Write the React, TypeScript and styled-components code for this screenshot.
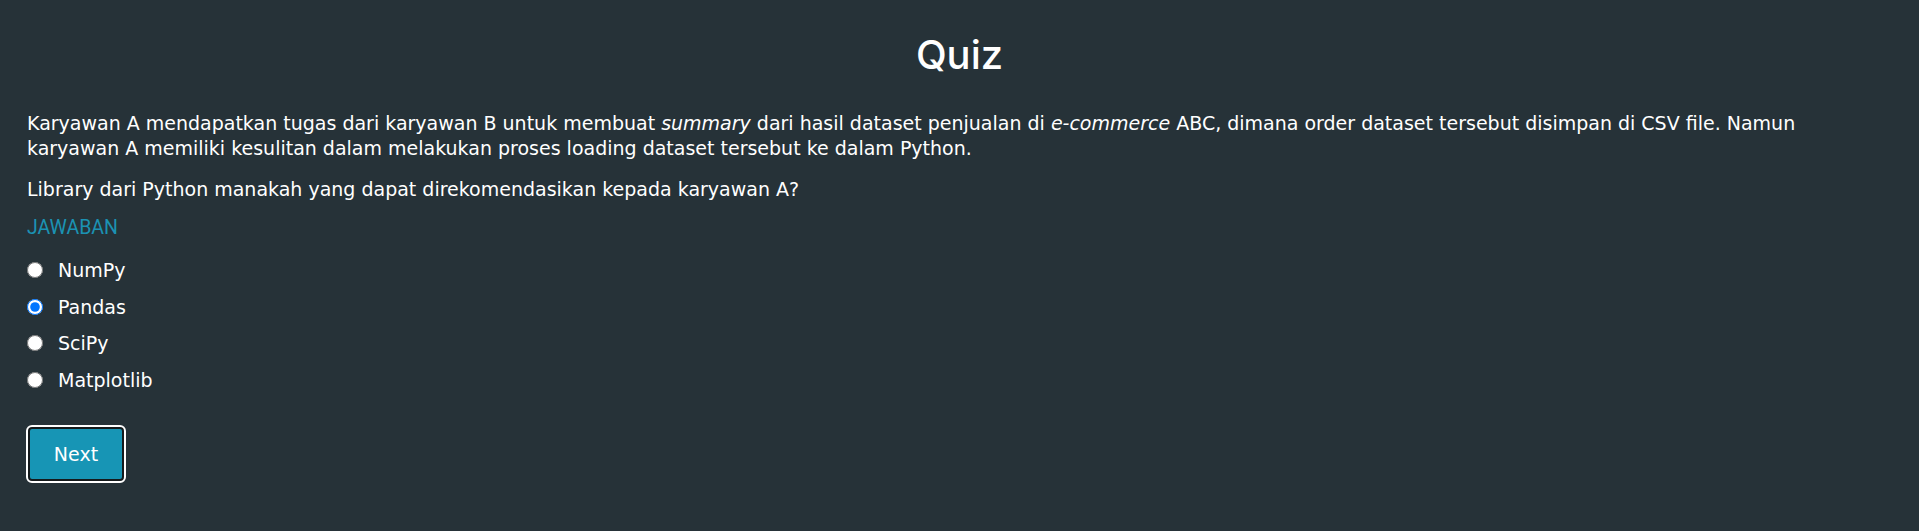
import React, { useState } from "react";
import styled, { createGlobalStyle } from "styled-components";

const GlobalStyle = createGlobalStyle`
  html, body {
    margin: 0;
    padding: 0;
    background: #263238;
  }
  body {
    font-family: "DejaVu Sans", Inter, sans-serif;
    color: #ffffff;
  }
`;

const Page = styled.div`
  min-height: 531px;
  padding: 0 27px;
  box-sizing: border-box;
`;

const Title = styled.h1`
  margin: 0;
  padding: 33px 0 34px;
  text-align: center;
  font-family: Inter, sans-serif;
  font-size: 40px;
  font-weight: 500;
  line-height: 44px;
`;

const Question = styled.p`
  margin: 0 0 16px;
  font-size: 19px;
  line-height: 25px;
`;

const Label = styled.div`
  font-family: Roboto, sans-serif;
  font-size: 19.5px;
  color: #1b92b3;
  margin: -1px 0 19px;
  line-height: 22px;
`;

const Options = styled.div`
  display: flex;
  flex-direction: column;
  gap: 12.5px;
`;

const Option = styled.label`
  display: flex;
  align-items: center;
  gap: 15px;
  font-size: 19px;
  line-height: 24px;
  cursor: pointer;

  input {
    margin: 0;
    width: 16px;
    height: 16px;
  }
`;

const NextButton = styled.button`
  margin: 35px 0 0 1px;
  width: 96px;
  height: 54px;
  background: #1795b5;
  color: #ffffff;
  border: 2px solid #151a1c;
  border-radius: 4px;
  outline: 2px solid #ffffff;
  font-family: "DejaVu Sans", sans-serif;
  font-size: 19px;
  cursor: pointer;
`;

const choices = ["NumPy", "Pandas", "SciPy", "Matplotlib"];

const App = () => {
  const [answer, setAnswer] = useState("Pandas");

  return (
    <Page>
      <GlobalStyle />
      <Title>Quiz</Title>
      <Question>
        Karyawan A mendapatkan tugas dari karyawan B untuk membuat <i>summary</i> dari hasil dataset
        penjualan di <i>e-commerce</i> ABC, dimana order dataset tersebut disimpan di CSV file. Namun
        karyawan A memiliki kesulitan dalam melakukan proses loading dataset tersebut ke dalam Python.
      </Question>
      <Question>Library dari Python manakah yang dapat direkomendasikan kepada karyawan A?</Question>
      <Label>JAWABAN</Label>
      <Options>
        {choices.map((c) => (
          <Option key={c}>
            <input
              type="radio"
              name="answer"
              checked={answer === c}
              onChange={() => setAnswer(c)}
            />
            {c}
          </Option>
        ))}
      </Options>
      <NextButton>Next</NextButton>
    </Page>
  );
};

export default App;
